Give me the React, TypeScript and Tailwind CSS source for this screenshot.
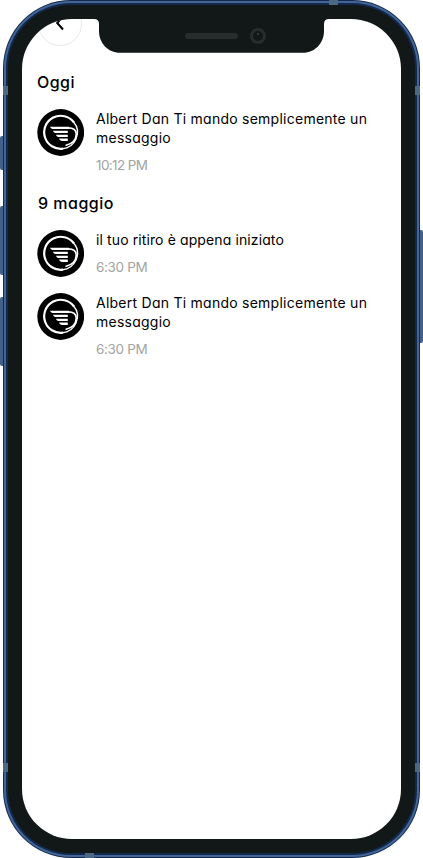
type Message = { text: string; time: string; textClass: string; timeClass: string };

function Logo() {
  return (
    <svg viewBox="0 0 47 47" className="h-[47px] w-[47px] shrink-0" aria-hidden="true">
      <circle cx="23.7" cy="23.5" r="23.4" fill="#000" />
      <path d="M37 13.5A16.5 16.5 0 1 0 26 39.6" fill="none" stroke="#fff" strokeWidth="2.2" />
      <path d="M36.6 13C40.5 17.5 41.6 24 39 30C36.5 35.5 31.5 39.2 25.5 39.7" fill="none" stroke="#fff" strokeWidth="1.4" />
      <path
        d="M31 18.9C36 18.9 39.2 21 39.2 25C39.2 31 34.5 35 28.5 36.6"
        fill="none"
        stroke="#fff"
        strokeWidth="1.6"
      />
      <path
        d="M13 17.8H32V20.1H17C14.8 20.1 13.6 19.4 13 17.8ZM16 21.7H30.8V24H19.5C17.5 24 16.4 23.3 16 21.7ZM19 25.7H30.8V28H22.5C20.5 28 19.4 27.3 19 25.7ZM22 29.6H30.8V31.9H25.5C23.5 31.9 22.4 31.2 22 29.6Z"
        fill="#fff"
      />
    </svg>
  );
}

function MessageRow({ text, time, textClass, timeClass }: Message) {
  return (
    <article className="flex gap-3">
      <Logo />
      <div className="min-w-0">
        <p className={`w-[284px] whitespace-pre-line leading-[19.5px] text-black ${textClass}`}>{text}</p>
        <p className={`text-[13.5px] leading-5 text-[#a3a3a3] ${timeClass}`}>{time}</p>
      </div>
    </article>
  );
}

export default function App() {
  return (
    <div className="relative flex h-[858px] w-[423px] overflow-hidden bg-white font-['Inter',sans-serif] [font-feature-settings:'cv11']">
      <div className="flex w-[3px] shrink-0 flex-col pt-[136px]">
        <i className="h-[34px] rounded-l-[2px] bg-[#426089]" />
        <i className="mt-9 h-[69px] rounded-l-[2px] bg-[#426089]" />
        <i className="mt-[22px] h-[69px] rounded-l-[2px] bg-[#426089]" />
      </div>

      <div className="h-[858px] w-[417px] shrink-0 rounded-[68px] bg-[#142b4e] p-px">
        <div className="h-full rounded-[67px] bg-[#426496] p-[2px]">
          <div className="h-full rounded-[65px] bg-[#12294b] p-[2px]">
            <div className="h-full rounded-[63px] bg-[#121717] p-[14px]">
              <main className="relative flex h-[820px] flex-col overflow-hidden rounded-[50px] bg-white px-[15px] pt-[52px]">
                <button aria-label="Indietro" className="absolute left-[16px] top-[-17px] h-[44px] w-[44px] rounded-full border border-[#e8e8e8]">
                  <svg viewBox="0 0 42 42" className="h-full w-full" fill="none" stroke="#000" strokeWidth="2">
                    <path d="M24 13.5L18.2 20L24 26.5" />
                  </svg>
                </button>
                <h2 className="text-base font-medium leading-[22px] tracking-[0.45px]">Oggi</h2>
                <div className="mt-[15.6px]">
                  <MessageRow
                    text={"Albert Dan Ti mando semplicemente un\nmessaggio"}
                    time="10:12 PM"
                    textClass="text-[14px] tracking-[0.25px]"
                    timeClass="mt-[7px] tracking-[-0.6px]"
                  />
                </div>
                <h2 className="mt-[17px] pl-px text-base font-medium leading-[22px] tracking-[0.5px]">9 maggio</h2>
                <div className="mt-4 flex flex-col gap-[15.8px]">
                  <MessageRow
                    text="il tuo ritiro è appena iniziato"
                    time="6:30 PM"
                    textClass="text-[14px] tracking-[0.11px]"
                    timeClass="mt-[7.7px] tracking-[-0.35px]"
                  />
                  <MessageRow
                    text={"Albert Dan Ti mando semplicemente un\nmessaggio"}
                    time="6:30 PM"
                    textClass="text-[14px] tracking-[0.25px]"
                    timeClass="mt-[7.9px] tracking-[-0.35px]"
                  />
                </div>
              </main>
            </div>
          </div>
        </div>
      </div>

      <div className="flex w-[3px] shrink-0 flex-col pt-[230px]">
        <i className="h-[113px] rounded-r-[2px] bg-[#426089]" />
      </div>

      <svg viewBox="0 0 240 36" className="absolute left-[92px] top-[18px] h-[36px] w-[240px]" aria-hidden="true">
        <path d="M0 0H240V1H237Q232 1 232 6V13C232 25 223 34.8 211 34.8H28C16 34.8 7 25 7 13V6Q7 1 2 1H0Z" fill="#121717" />
        <rect x="93" y="15" width="53" height="6" rx="3" fill="#282c2d" />
        <circle cx="166" cy="18" r="6.5" fill="none" stroke="#282c2d" strokeWidth="3" />
        <rect x="165" y="15" width="2" height="2" fill="#343a3c" />
      </svg>

      <svg viewBox="0 0 423 858" className="pointer-events-none absolute inset-0 h-full w-full" fill="#4d6883" aria-hidden="true">
        <rect x="329" y="0" width="9" height="5" />
        <rect x="85" y="853" width="9" height="5" />
        <rect x="3" y="86" width="5" height="9" />
        <rect x="3" y="763" width="5" height="9" />
        <rect x="415" y="86" width="5" height="9" />
        <rect x="415" y="763" width="5" height="9" />
      </svg>
    </div>
  );
}
